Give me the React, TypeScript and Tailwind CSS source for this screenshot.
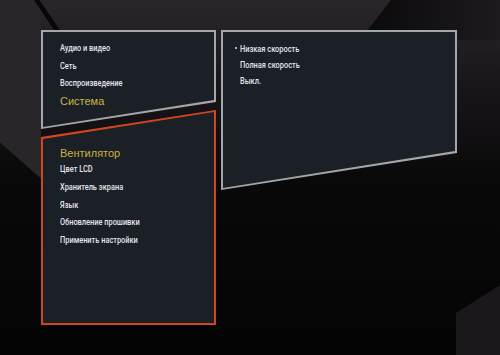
const menu = ['Аудио и видео', 'Сеть', 'Воспроизведение'];
const speeds = ['Низкая скорость', 'Полная скорость', 'Выкл.'];
const settings = ['Цвет LCD', 'Хранитель экрана', 'Язык', 'Обновление прошивки', 'Применить настройки'];

export default function App() {
  return (
    <div
      className="relative h-[355px] w-[500px] overflow-hidden bg-[linear-gradient(180deg,#2a2629_0%,#1a171a_22%,#0a090a_50%,#050405_100%)] font-['Liberation_Sans',sans-serif] text-[#e4e4ec]"
    >
      {/* background streaks */}
      <div className="pointer-events-none absolute inset-0">
        <div className="absolute left-0 top-0 h-[190px] w-[41px] bg-[#29262a] [clip-path:polygon(0_0,100%_0,100%_94%,0_75%)]" />
        <div className="absolute left-[34px] top-0 h-[36px] w-[30px] bg-[#080708] [clip-path:polygon(0_0,18%_0,100%_100%,80%_100%)]" />
        <div className="absolute right-0 top-0 h-[40px] w-[140px] bg-[linear-gradient(90deg,#0a090a,#1d1a1d)] [clip-path:polygon(22%_0,100%_0,100%_100%,0_100%)]" />
        <div className="absolute bottom-0 right-0 h-[70px] w-[44px] bg-[#1a181a] [clip-path:polygon(0_40%,100%_0,100%_100%,0_100%)]" />
      </div>

      <div className="relative flex gap-[5px] pl-[41px] pt-[30px] font-['Roboto',sans-serif]">
        {/* left column */}
        <div className="flex w-[175px] flex-col">
          <div className="h-[99px] bg-[#a3a7ac] p-[2px] [clip-path:polygon(0_0,100%_0,100%_72px,0_100%)]">
            <div className="flex h-full flex-col bg-[#1b1f26] pl-[17px] pt-[8px] [clip-path:polygon(0_0,100%_0,100%_68px,0_100%)]">
              {menu.map((m) => (
                <div key={m} className="origin-left scale-x-[0.87] text-[8.5px] font-medium leading-[17.5px]">{m}</div>
              ))}
              <div className="font-['Liberation_Sans',sans-serif] text-[11px] leading-[17.5px] text-[#c9b444]">Система</div>
            </div>
          </div>

          <div className="-mt-[19px] h-[215px] bg-[#d2461f] p-[2px] [clip-path:polygon(0_27px,100%_0,100%_100%,0_100%)]">
            <div className="flex h-full flex-col bg-[#1b1f26] pl-[17px] pt-[33px] [clip-path:polygon(0_27px,100%_0,100%_100%,0_100%)]">
              <div className="font-['Liberation_Sans',sans-serif] text-[11px] leading-[16px] text-[#c9b444]">Вентилятор</div>
              {settings.map((s) => (
                <div key={s} className="origin-left scale-x-[0.87] text-[8.5px] font-medium leading-[17.75px]">{s}</div>
              ))}
            </div>
          </div>
        </div>

        {/* right panel */}
        <div className="h-[160px] w-[236px] bg-[#a3a7ac] p-[2px] [clip-path:polygon(0_0,100%_0,100%_123px,0_100%)]">
          <div className="flex h-full flex-col bg-[#1b1f26] pl-[17px] pt-[9px] [clip-path:polygon(0_0,100%_0,100%_119px,0_100%)]">
            {speeds.map((s, i) => (
              <div key={s} className="relative text-[8.5px] font-medium leading-[16px]">
                {i === 0 && <span className="absolute -left-[5px] top-[6px] h-[2px] w-[2px] rounded-full bg-[#e8e2b0]" />}
                <span className="inline-block origin-left scale-x-[0.87]">{s}</span>
              </div>
            ))}
          </div>
        </div>
      </div>
    </div>
  );
}
